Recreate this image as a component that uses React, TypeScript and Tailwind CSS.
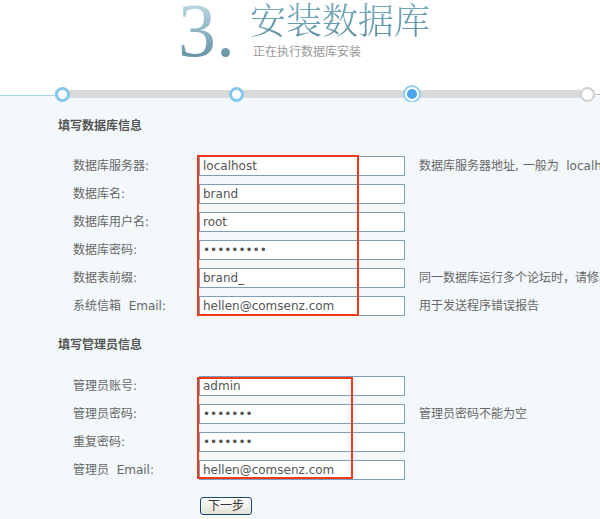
import React from "react";

const FONT = "font-['DejaVu_Sans','Noto_Sans_CJK_SC',sans-serif]";

type Row = { label: string; value: string; type?: string; hint?: string };

const dbRows: Row[] = [
  { label: "数据库服务器:", value: "localhost", hint: "数据库服务器地址, 一般为  localhost" },
  { label: "数据库名:", value: "brand" },
  { label: "数据库用户名:", value: "root" },
  { label: "数据库密码:", value: "123456789", type: "password" },
  { label: "数据表前缀:", value: "brand_", hint: "同一数据库运行多个论坛时，请修改前缀" },
  { label: "系统信箱  Email:", value: "hellen@comsenz.com", hint: "用于发送程序错误报告" },
];

const adminRows: Row[] = [
  { label: "管理员账号:", value: "admin" },
  { label: "管理员密码:", value: "1234567", type: "password", hint: "管理员密码不能为空" },
  { label: "重复密码:", value: "1234567", type: "password" },
  { label: "管理员  Email:", value: "hellen@comsenz.com" },
];

function FormRow({ row }: { row: Row }) {
  return (
    <div className="flex h-[20px] items-center whitespace-nowrap">
      <div className="w-[199px] shrink-0 whitespace-pre pl-[73px] text-[12px] leading-[16px] text-[#666]">
        {row.label}
      </div>
      <input
        readOnly
        type={row.type ?? "text"}
        value={row.value}
        className={`${FONT} h-[20px] w-[206px] shrink-0 border border-[#7f9db9] bg-white px-[3px] text-[12px] text-[#555] outline-none`}
      />
      {row.hint && (
        <div className="ml-[14px] shrink-0 whitespace-pre text-[12px] leading-[16px] text-[#666]">
          {row.hint}
        </div>
      )}
    </div>
  );
}

function Dot({ kind }: { kind: "done" | "active" | "todo" }) {
  if (kind === "active") {
    return (
      <div className="flex h-[18px] w-[18px] shrink-0 items-center justify-center rounded-full border-2 border-[#8fcdf3] bg-white">
        <div className="h-[10px] w-[10px] rounded-full bg-[#4aa6e8]" />
      </div>
    );
  }
  if (kind === "todo") {
    return <div className="h-[15px] w-[15px] shrink-0 rounded-full border-2 border-[#cfcfcf] bg-white" />;
  }
  return <div className="h-[15px] w-[15px] shrink-0 rounded-full border-[3px] border-[#83c7f1] bg-white" />;
}

export default function App() {
  return (
    <div className={`${FONT} flex min-h-[519px] w-full flex-col overflow-hidden bg-white`}>
      {/* header */}
      <div className="flex h-[86px] shrink-0 pl-[178px]">
        <div className="mt-[-15px] h-[90px] bg-gradient-to-b from-[#bcd8e3] from-20% to-[#4a7e95] bg-clip-text font-['Liberation_Serif',serif] text-[76px] leading-[90px] text-transparent">
          3.
        </div>
        <div className="ml-[15px] flex flex-col">
          <div className="mt-[-3px] h-[44px] bg-gradient-to-b from-[#7fb1c3] to-[#5a8ea4] bg-clip-text font-['Noto_Serif_CJK_SC','Noto_Sans_CJK_SC',serif] text-[36px] font-light leading-[44px] text-transparent">
            安装数据库
          </div>
          <div className="ml-[3px] mt-[3px] text-[12px] leading-[16px] text-[#999]">正在执行数据库安装</div>
        </div>
      </div>

      {/* progress */}
      <div className="flex h-[16px] shrink-0 items-center bg-[linear-gradient(to_bottom,#ffffff_0,#ffffff_10px,#f3f8fb_10px)]">
        <div className="mt-[9px] h-px w-[55px] shrink-0 self-start bg-[#a6d2ee]" />
        <div className="flex h-[16px] w-[540px] shrink-0 items-center justify-between bg-[linear-gradient(to_bottom,transparent_4px,#d9d9d9_4px,#d9d9d9_12px,transparent_12px)]">
          <Dot kind="done" />
          <Dot kind="done" />
          <Dot kind="active" />
          <Dot kind="todo" />
        </div>
        <div className="h-px flex-1 bg-[#a9c3d3]" />
      </div>

      {/* content */}
      <div className="flex flex-1 flex-col bg-[#f3f8fb] pt-[16px]">
        <div className="pl-[58px] text-[12px] font-bold leading-[16px] text-[#555]">填写数据库信息</div>

        <div className="relative mt-[22px] flex flex-col gap-[8px]">
          {dbRows.map((r) => (
            <FormRow key={r.label} row={r} />
          ))}
          <div className="pointer-events-none absolute left-[197px] top-[-1px] h-[161px] w-[162px] border-2 border-[#ee3a1c]" />
        </div>

        <div className="mt-[21px] pl-[58px] text-[12px] font-bold leading-[16px] text-[#555]">填写管理员信息</div>

        <div className="relative mt-[23px] flex flex-col gap-[8px]">
          {adminRows.map((r) => (
            <FormRow key={r.label} row={r} />
          ))}
          <div className="pointer-events-none absolute left-[197px] top-[1px] h-[102px] w-[156px] border-2 border-[#ee3a1c]" />
        </div>

        <div className="mt-[17px] pl-[200px]">
          <button className="flex h-[18px] w-[52px] items-center justify-center rounded-[3px] border border-[#1c4578] bg-gradient-to-b from-white to-[#e3e0d4] text-[12px] leading-none text-[#333]">
            下一步
          </button>
        </div>
      </div>
    </div>
  );
}
